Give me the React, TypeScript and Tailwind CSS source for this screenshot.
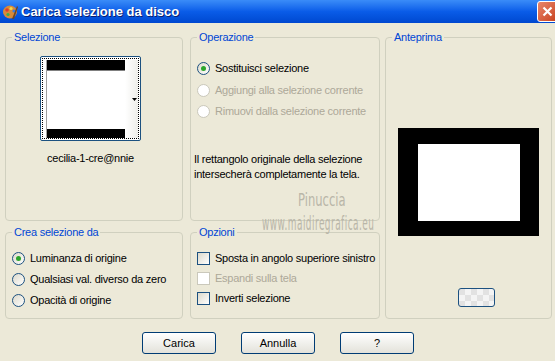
import React from "react";

const ui = { fontFamily: '"Liberation Sans", Arial, sans-serif' };

function Radio({ checked, disabled }: { checked?: boolean; disabled?: boolean }) {
  return (
    <span
      className={`flex h-[13px] w-[13px] shrink-0 items-center justify-center rounded-full border ${
        disabled ? "border-[#cac8bb] bg-white" : "border-[#1c5180] bg-gradient-to-br from-[#dcd9cb] to-white"
      }`}
    >
      {checked && <span className="h-[5px] w-[5px] rounded-full bg-[#2ba52b]" />}
    </span>
  );
}

function Check({ disabled }: { disabled?: boolean }) {
  return (
    <span
      className={`h-[13px] w-[13px] shrink-0 border ${
        disabled ? "border-[#cac8bb] bg-white" : "border-[#1c5180] bg-gradient-to-br from-[#dcd9cb] to-white"
      }`}
    />
  );
}

function Group({ title, className, children }: { title: string; className: string; children?: React.ReactNode }) {
  return (
    <fieldset className={`rounded-[4px] border border-[#d0d0bf] ${className}`}>
      <legend className="ml-[6px] px-[2px] text-[11px] leading-[13px] text-[#0046d5]">{title}</legend>
      {children}
    </fieldset>
  );
}

function Btn({ label }: { label: string }) {
  return (
    <button className="h-[22px] w-[74px] rounded-[3px] border border-[#003c74] bg-gradient-to-b from-white to-[#e3e2da] text-[11px] text-black">
      {label}
    </button>
  );
}

export default function App() {
  return (
    <div className="relative h-[361px] w-[555px] overflow-hidden whitespace-nowrap bg-[#ece9d8] tracking-[-0.25px]" style={ui}>
      {/* title bar */}
      <div className="flex h-[23px] items-center bg-gradient-to-b from-[#3a8cf8] via-[#0a5ce8] to-[#0048d0] tracking-normal">
        <svg width="17" height="17" viewBox="0 0 17 17" className="ml-[2px]">
          <ellipse cx="8" cy="9" rx="7" ry="6.5" fill="#d88a3a" />
          <circle cx="5" cy="7" r="1.8" fill="#e23c2c" />
          <circle cx="9" cy="5.5" r="1.6" fill="#f2d94a" />
          <circle cx="12" cy="8" r="1.6" fill="#3a7be0" />
          <circle cx="6" cy="11.5" r="1.6" fill="#3fae49" />
          <path d="M10 16 L15 3 L16 4 L12 16 Z" fill="#6b4426" />
        </svg>
        <span className="ml-[2px] text-[13px] font-bold text-white [text-shadow:1px_1px_0_#0a1e6e]">
          Carica selezione da disco
        </span>
        <div className="ml-auto mr-[-3px] flex h-[21px] w-[21px] items-center justify-center rounded-[3px] border border-white bg-gradient-to-br from-[#e8866a] to-[#c8401a]">
          <svg width="11" height="11" viewBox="0 0 11 11">
            <path d="M1.5 1.5 L9.5 9.5 M9.5 1.5 L1.5 9.5" stroke="white" strokeWidth="2.2" />
          </svg>
        </div>
      </div>

      {/* groups */}
      <div className="mt-[8px] flex pl-[5px]">
        <div className="flex w-[178px] flex-col gap-[5px]">
          <Group title="Selezione" className="h-[190px]">
            <div className="ml-[34px] mt-[12px] flex w-[101px] flex-col items-center">
              <div className="h-[85px] w-[101px] rounded-[2px] border border-[#1c5180] bg-white p-[1px]">
                <div className="flex h-full w-full border border-dotted border-black pl-[3px] pt-[1px]">
                  <div className="flex w-[79px] flex-col border-l border-[#a0a0a0]">
                    <div className="h-[10px] bg-black" />
                    <div className="h-[1px] bg-[#808080]" />
                    <div className="flex-1 bg-white" />
                    <div className="h-[9px] bg-black" />
                  </div>
                  <div className="flex flex-1 items-center justify-end bg-gradient-to-r from-white to-[#eeeeea] pr-[1px]">
                    <svg width="5" height="3" viewBox="0 0 5 3">
                      <path d="M0 0 H5 L2.5 3 Z" fill="black" />
                    </svg>
                  </div>
                </div>
              </div>
              <div className="mt-[9px] text-[11px] text-black">cecilia-1-cre@nnie</div>
            </div>
          </Group>
          <Group title="Crea selezione da" className="h-[93px]">
            <div className="ml-[6px] mt-[13px] flex flex-col gap-[8px] text-[11px] leading-[13px] text-black">
              <div className="flex items-center gap-[5px]">
                <Radio checked />
                Luminanza di origine
              </div>
              <div className="flex items-center gap-[5px]">
                <Radio />
                Qualsiasi val. diverso da zero
              </div>
              <div className="flex items-center gap-[5px]">
                <Radio />
                Opacità di origine
              </div>
            </div>
          </Group>
        </div>

        <div className="ml-[7px] flex w-[190px] flex-col gap-[5px]">
          <Group title="Operazione" className="h-[190px]">
            <div className="ml-[6px] mt-[18px] flex flex-col gap-[8.5px] text-[11px] leading-[13px]">
              <div className="flex items-center gap-[5px] text-black">
                <Radio checked />
                Sostituisci selezione
              </div>
              <div className="flex items-center gap-[5px] text-[#aca899]">
                <Radio disabled />
                Aggiungi alla selezione corrente
              </div>
              <div className="flex items-center gap-[5px] text-[#aca899]">
                <Radio disabled />
                Rimuovi dalla selezione corrente
              </div>
            </div>
            <p className="ml-[3px] mt-[34px] text-[11px] leading-[15px] text-black">
              Il rettangolo originale della selezione
              <br />
              intersecherà completamente la tela.
            </p>
          </Group>
          <Group title="Opzioni" className="h-[93px]">
            <div className="ml-[6px] mt-[13px] flex flex-col gap-[7px] text-[11px] leading-[13px]">
              <div className="flex items-center gap-[5px] text-black">
                <Check />
                Sposta in angolo superiore sinistro
              </div>
              <div className="flex items-center gap-[5px] text-[#aca899]">
                <Check disabled />
                Espandi sulla tela
              </div>
              <div className="flex items-center gap-[5px] text-black">
                <Check />
                Inverti selezione
              </div>
            </div>
          </Group>
        </div>

        <Group title="Anteprima" className="ml-[5px] flex h-[288px] w-[167px] flex-col items-center">
          <div className="mt-[84px] h-[108px] w-[141px] bg-black pb-[15px] pl-[20px] pr-[19px] pt-[16px]">
            <div className="h-full w-full bg-white" />
          </div>
          <div className="ml-[16px] mt-[52px] h-[19px] w-[37px] rounded-[3px] border border-[#1c5180] bg-[conic-gradient(#f4f4f4_25%,#e2e2e2_0_50%,#f4f4f4_0_75%,#e2e2e2_0)] bg-[length:12px_12px]" />
        </Group>
      </div>

      {/* buttons */}
      <div className="mt-[13px] flex justify-center gap-[25px] pl-[1px] tracking-normal">
        <Btn label="Carica" />
        <Btn label="Annulla" />
        <Btn label="?" />
      </div>

      {/* watermark */}
      <div className="pointer-events-none absolute left-[298px] top-[192px] origin-left scale-x-[0.68] text-[17px] leading-[17px] tracking-normal text-[#b9b6a8]" style={{ fontFamily: '"DejaVu Sans", sans-serif' }}>
        Pinuccia
      </div>
      <div className="pointer-events-none absolute left-[262px] top-[214px] origin-left scale-x-[0.47] text-[19px] leading-[19px] tracking-[1px] text-[#b9b6a8]" style={{ fontFamily: '"DejaVu Sans", sans-serif' }}>
        www.maidiregrafica.eu
      </div>
    </div>
  );
}
